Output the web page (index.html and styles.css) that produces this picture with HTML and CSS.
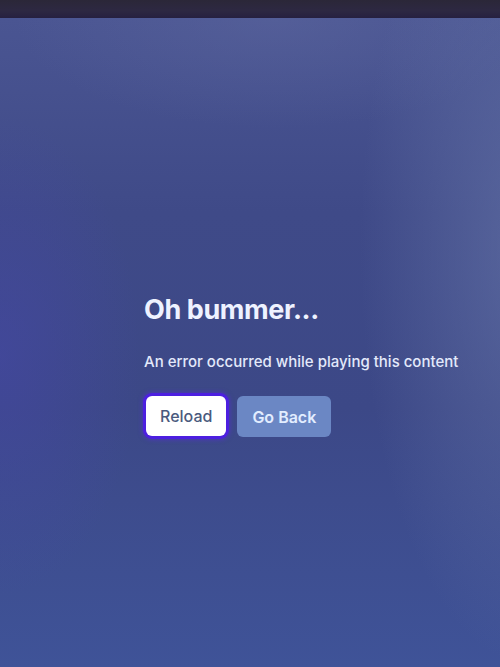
FILE: index.html
```html
<!DOCTYPE html>
<html>
<head>
<meta charset="utf-8">
<link rel="stylesheet" href="styles.css">
</head>
<body>
<div class="bezel"></div>
<main class="screen">
  <section class="error">
    <h1 class="title">Oh bummer...</h1>
    <p class="message">An error occurred while playing this content</p>
    <div class="actions">
      <button class="btn btn-primary">Reload</button>
      <button class="btn btn-secondary">Go Back</button>
    </div>
  </section>
</main>
</body>
</html>
```
FILE: styles.css
```css
html, body {
  margin: 0;
  padding: 0;
  width: 500px;
  height: 667px;
  overflow: hidden;
}
body {
  display: flex;
  flex-direction: column;
  background: #2a2540;
  font-family: Inter, "Noto Sans", sans-serif;
}
.bezel {
  height: 18px;
  flex: none;
  background: linear-gradient(180deg, #2b2738 0%, #2d2842 60%, #262040 100%);
}
.screen {
  flex: 1;
  display: flex;
  flex-direction: column;
  padding: 0 0 0 144px;
  background:
    radial-gradient(ellipse 140px 240px at 0% 52%, rgba(70, 70, 170, 0.5), rgba(70, 70, 170, 0) 100%),
    radial-gradient(ellipse 170px 420px at 106% 35%, rgba(105, 120, 170, 0.6), rgba(105, 120, 170, 0) 100%),
    radial-gradient(ellipse 260px 110px at 55% 0%, rgba(95, 105, 160, 0.45), rgba(95, 105, 160, 0) 100%),
    linear-gradient(180deg, #4a5592 0%, #3f4a88 30%, #3c4887 60%, #3f5398 100%);
}
.error {
  display: flex;
  flex-direction: column;
  padding-top: 275px;
}
.title {
  margin: 0;
  font-size: 27px;
  font-weight: 700;
  line-height: 34px;
  letter-spacing: -0.4px;
  color: #eef2ff;
}
.message {
  margin: 25px 0 0;
  font-size: 15px;
  font-weight: 500;
  line-height: 20px;
  color: #e3e9fb;
}
.actions {
  display: flex;
  gap: 11px;
  margin-top: 24px;
}
.btn {
  font-family: inherit;
  font-size: 16px;
  height: 40px;
  border-radius: 6px;
  border: none;
}
.btn-primary {
  background: #ffffff;
  color: #4a5a7e;
  font-weight: 500;
  padding: 0 14px;
  margin-left: 2px;
  box-shadow: 0 0 0 3px #4c1fe0, 0 0 4px 4px rgba(90, 40, 230, 0.5);
}
.btn-secondary {
  background: #6b87c4;
  color: #e2edff;
  font-weight: 600;
  height: 41px;
  padding: 0 15px;
}
```
